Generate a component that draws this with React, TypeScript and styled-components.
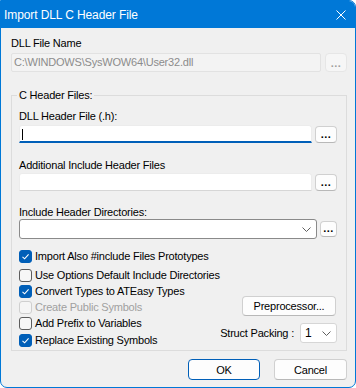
import React from "react";
import styled, { createGlobalStyle } from "styled-components";

const GlobalStyle = createGlobalStyle`
  html, body { margin: 0; padding: 0; background: #ffffff; }
  body {
    font-family: "Liberation Sans", Arial, sans-serif;
    font-size: 11px;
    letter-spacing: -0.2px;
    color: #000000;
  }
  * { box-sizing: border-box; }
`;

const Window = styled.div`
  width: 356px;
  height: 388px;
  border: 1px solid #0078d7;
  border-radius: 0 7px 7px 7px;
  background: #f0f0f0;
  display: flex;
  flex-direction: column;
  overflow: hidden;
`;

const TitleBar = styled.div`
  flex: none;
  height: 27px;
  background: #0078d7;
  color: #ffffff;
  display: flex;
  align-items: center;
  justify-content: space-between;
  padding: 0 9px 0 3px;
  font-size: 12px;
  letter-spacing: -0.1px;
`;

const Content = styled.div`
  padding: 8px 8px 0 10px;
  display: flex;
  flex-direction: column;
`;

const Label = styled.div<{ $mt?: number; $mb?: number; $disabled?: boolean }>`
  height: 14px;
  line-height: 14px;
  white-space: nowrap;
  margin-top: ${(p) => p.$mt ?? 0}px;
  margin-bottom: ${(p) => p.$mb ?? 0}px;
  color: ${(p) => (p.$disabled ? "#a0a0a0" : "#000000")};
`;

const FieldRow = styled.div<{ $gap: number }>`
  display: flex;
  align-items: center;
  gap: ${(p) => p.$gap}px;
`;

const DisabledInput = styled.div`
  flex: 1;
  height: 19px;
  line-height: 17px;
  padding-left: 2px;
  background: #f3f3f3;
  border: 1px solid #e2e2e2;
  border-radius: 2px;
  color: #8c8c8c;
`;

const TextBox = styled.div<{ $focused?: boolean }>`
  flex: 1;
  height: 18px;
  position: relative;
  background: #ffffff;
  border: 1px solid #ececec;
  border-bottom: ${(p) => (p.$focused ? "2px solid #005fb8" : "1px solid #d6d6d6")};
  border-radius: 3px 3px 0 0;
`;

const Caret = styled.span`
  position: absolute;
  left: 2px;
  top: 3px;
  width: 1px;
  height: 11px;
  background: #000000;
`;

const Combo = styled.div`
  flex: 1;
  height: 20px;
  background: #ffffff;
  border: 1px solid #8a8a8a;
  border-radius: 3px;
  display: flex;
  align-items: center;
  justify-content: flex-end;
  padding-right: 5px;
`;

const DotButton = styled.div<{ $w: number; $h: number; $disabled?: boolean }>`
  flex: none;
  width: ${(p) => p.$w}px;
  height: ${(p) => p.$h}px;
  border-radius: 4px;
  background: ${(p) => (p.$disabled ? "#f6f6f6" : "#fdfdfd")};
  border: 1px solid ${(p) => (p.$disabled ? "#e6e6e6" : "#d0d0d0")};
  border-bottom-color: ${(p) => (p.$disabled ? "#e6e6e6" : "#b8b8b8")};
  color: ${(p) => (p.$disabled ? "#a0a0a0" : "#000000")};
  font-weight: bold;
  font-size: 11px;
  letter-spacing: 0.5px;
  display: flex;
  align-items: flex-end;
  justify-content: center;
  padding-bottom: 2px;
  line-height: 11px;
`;

const Group = styled.fieldset`
  margin: 16px 0 0 0;
  padding: 7px 9px 2px 7px;
  border: 1px solid #dcdcdc;
  min-width: 0;
`;

const Legend = styled.legend`
  padding: 0 2px;
  margin-left: -2px;
  line-height: 14px;
  height: 14px;
`;

const Lower = styled.div`
  display: flex;
  margin-top: 9px;
`;

const CheckList = styled.div`
  display: flex;
  flex-direction: column;
`;

const CheckRow = styled.div<{ $mt: number; $disabled?: boolean }>`
  height: 16px;
  margin-top: ${(p) => p.$mt}px;
  display: flex;
  align-items: center;
  gap: 3px;
  white-space: nowrap;
  color: ${(p) => (p.$disabled ? "#a0a0a0" : "#000000")};
`;

const Box = styled.span<{ $checked?: boolean; $disabled?: boolean }>`
  flex: none;
  width: 13px;
  height: 13px;
  border-radius: 3px;
  display: flex;
  align-items: center;
  justify-content: center;
  background: ${(p) => (p.$checked ? "#005fb8" : p.$disabled ? "#f5f5f5" : "#f7f7f7")};
  border: 1px solid
    ${(p) => (p.$checked ? "#005fb8" : p.$disabled ? "#cfcfcf" : "#5d5d5d")};
`;

const RightColumn = styled.div`
  margin-left: auto;
  align-self: flex-end;
  display: flex;
  flex-direction: column;
  align-items: flex-end;
  gap: 7px;
  padding-bottom: 5px;
`;

const PushButton = styled.div<{ $w: number; $h: number; $default?: boolean; $mr?: number }>`
  width: ${(p) => p.$w}px;
  height: ${(p) => p.$h}px;
  margin-right: ${(p) => p.$mr ?? 0}px;
  border-radius: 4px;
  background: #fdfdfd;
  border: 1px solid ${(p) => (p.$default ? "#005fb8" : "#d0d0d0")};
  border-bottom-color: ${(p) => (p.$default ? "#005fb8" : "#b8b8b8")};
  display: flex;
  align-items: center;
  justify-content: center;
  white-space: nowrap;
`;

const StructRow = styled.div`
  display: flex;
  align-items: center;
  gap: 6px;
`;

const SmallSelect = styled.div`
  width: 37px;
  height: 20px;
  background: #ffffff;
  border: 1px solid #d6d6d6;
  border-radius: 3px;
  display: flex;
  align-items: center;
  justify-content: space-between;
  padding: 0 5px 0 4px;
  font-size: 12px;
`;

const Footer = styled.div`
  display: flex;
  justify-content: flex-end;
  gap: 14px;
  margin-top: 8px;
`;

const Chevron = () => (
  <svg width="9" height="5" viewBox="0 0 9 5">
    <path d="M0.5 0.5 L4.5 4.5 L8.5 0.5" fill="none" stroke="#5f5f5f" strokeWidth="1" />
  </svg>
);

const CloseIcon = () => (
  <svg width="10" height="10" viewBox="0 0 10 10">
    <path d="M0.5 0.5 L9.5 9.5 M9.5 0.5 L0.5 9.5" stroke="#ffffff" strokeWidth="1" />
  </svg>
);

const Check = () => (
  <svg width="11" height="11" viewBox="0 0 11 11">
    <path d="M2.5 5.8 L4.6 7.8 L8.6 3.3" fill="none" stroke="#ffffff" strokeWidth="1.1" />
  </svg>
);

type CheckItem = { text: string; checked?: boolean; disabled?: boolean; mt: number };

const checks: CheckItem[] = [
  { text: "Import Also #include Files Prototypes", checked: true, mt: 0 },
  { text: "Use Options Default Include Directories", mt: 3 },
  { text: "Convert Types to ATEasy Types", checked: true, mt: 0 },
  { text: "Create Public Symbols", disabled: true, mt: 0 },
  { text: "Add Prefix to Variables", mt: 0 },
  { text: "Replace Existing Symbols", checked: true, mt: 1 },
];

export default function App() {
  return (
    <>
      <GlobalStyle />
      <Window>
        <TitleBar>
          <span>Import DLL C Header File</span>
          <CloseIcon />
        </TitleBar>
        <Content>
          <Label $mb={3}>DLL File Name</Label>
          <FieldRow $gap={4}>
            <DisabledInput>C:\WINDOWS\SysWOW64\User32.dll</DisabledInput>
            <DotButton $w={22} $h={19} $disabled>...</DotButton>
          </FieldRow>

          <Group>
            <Legend>C Header Files:</Legend>
            <Label $mb={2}>DLL Header File (.h):</Label>
            <FieldRow $gap={3}>
              <TextBox $focused>
                <Caret />
              </TextBox>
              <DotButton $w={22} $h={17}>...</DotButton>
            </FieldRow>

            <Label $mt={15} $mb={1}>Additional Include Header Files</Label>
            <FieldRow $gap={3}>
              <TextBox />
              <DotButton $w={22} $h={17}>...</DotButton>
            </FieldRow>

            <Label $mt={14}>Include Header Directories:</Label>
            <FieldRow $gap={3}>
              <Combo>
                <Chevron />
              </Combo>
              <DotButton $w={17} $h={16}>...</DotButton>
            </FieldRow>

            <Lower>
              <CheckList>
                {checks.map((c) => (
                  <CheckRow key={c.text} $mt={c.mt} $disabled={c.disabled}>
                    <Box $checked={c.checked} $disabled={c.disabled}>
                      {c.checked && <Check />}
                    </Box>
                    <span>{c.text}</span>
                  </CheckRow>
                ))}
              </CheckList>
              <RightColumn>
                <PushButton $w={94} $h={20} $mr={1}>Preprocessor...</PushButton>
                <StructRow>
                  <span>Struct Packing :</span>
                  <SmallSelect>
                    <span>1</span>
                    <Chevron />
                  </SmallSelect>
                </StructRow>
              </RightColumn>
            </Lower>
          </Group>

          <Footer>
            <PushButton $w={72} $h={21} $default>OK</PushButton>
            <PushButton $w={73} $h={21}>Cancel</PushButton>
          </Footer>
        </Content>
      </Window>
    </>
  );
}
